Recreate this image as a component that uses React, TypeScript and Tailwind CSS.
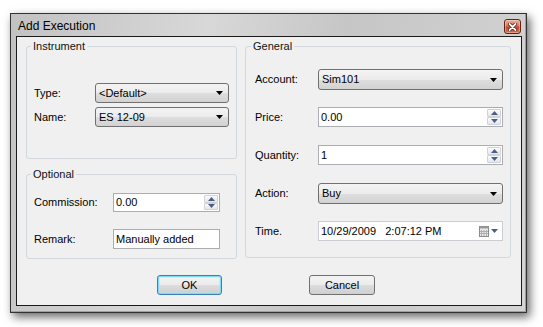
import React from 'react';

const font = { fontFamily: '"Liberation Sans", Arial, sans-serif' };

const Arrow = () => (
  <svg width="7" height="4" viewBox="0 0 7 4">
    <polygon points="0,0 7,0 3.5,4" fill="#000" />
  </svg>
);

const Combo: React.FC<{ value: string; className: string }> = ({ value, className }) => (
  <div
    className={`flex items-center justify-between rounded-[3px] border border-[#707070] bg-[linear-gradient(#f4f4f4_0%,#ebebeb_50%,#dedede_51%,#d2d2d2_100%)] pl-[3px] pr-[5px] text-[11px] text-black ${className}`}
  >
    <span>{value}</span>
    <Arrow />
  </div>
);

const SpinBtn: React.FC<{ up?: boolean }> = ({ up }) => (
  <div className="flex flex-1 items-center justify-center rounded-[1px] border border-[#cfd3d8] bg-[linear-gradient(#fbfbfb,#e4e6ea)]">
    <svg width="7" height="4" viewBox="0 0 7 4">
      <polygon points={up ? '0,4 7,4 3.5,0' : '0,0 7,0 3.5,4'} fill="#4c5e86" />
    </svg>
  </div>
);

const Spin: React.FC<{ value: string; className: string }> = ({ value, className }) => (
  <div className={`flex items-stretch border border-[#abadb3] bg-white ${className}`}>
    <span className="flex flex-1 items-center pl-[2px] text-[11px] text-black">{value}</span>
    <div className="m-[1px] flex w-[14px] flex-col">
      <SpinBtn up />
      <SpinBtn />
    </div>
  </div>
);

const Field: React.FC<{ label: string; labelW: string; mt: string; children: React.ReactNode }> = ({
  label,
  labelW,
  mt,
  children,
}) => (
  <div className={`flex items-center ${mt}`}>
    <span className={`${labelW} shrink-0 text-[11px] text-black`}>{label}</span>
    {children}
  </div>
);

const Group: React.FC<{ title: string; className: string; legend: string; children: React.ReactNode }> = ({
  title,
  className,
  legend,
  children,
}) => (
  <fieldset className={`rounded-[3px] border border-[#d2d8dc] ${className}`}>
    <legend className={`${legend} px-[2px] text-[11px] leading-[13px] text-[#111]`}>{title}</legend>
    {children}
  </fieldset>
);

export default function App() {
  return (
    <div className="h-[327px] w-[543px] overflow-hidden bg-white pl-[10px] pt-[13px]" style={font}>
      <div className="h-[300px] w-[517px] border border-[#333] shadow-[3px_4px_9px_rgba(0,0,0,0.6)]">
        <div className="flex h-full w-full flex-col border-b border-r border-[#3ec3e0] bg-[linear-gradient(100deg,#c2c2c2,#d8d8d8_35%,#c6c6c6_60%,#d4d4d4)] pb-[5px] pl-[5px] pr-[3px]">
          {/* title bar */}
          <div className="-ml-[5px] -mr-[3px] flex h-[22px] shrink-0 items-start justify-between pl-[7px] pr-[4px]">
            <span className="mt-[4px] text-[12px] leading-[16px] text-black">Add Execution</span>
            <div className="mt-[5px] flex h-[15px] w-[17px] items-center justify-center rounded-[3px] border border-[#5e2417] bg-[linear-gradient(#eeb09c,#da7258_45%,#c9442a_55%,#dc6c4c)] shadow-[inset_0_0_0_1px_rgba(255,255,255,0.35)]">
              <svg width="9" height="8" viewBox="0 0 9 8">
                <path d="M1.5 1 L7.5 7 M7.5 1 L1.5 7" stroke="#4a1a12" strokeWidth="3.4" strokeLinecap="round" />
                <path d="M1.5 1 L7.5 7 M7.5 1 L1.5 7" stroke="#fff" strokeWidth="1.8" strokeLinecap="round" />
              </svg>
            </div>
          </div>

          {/* client area */}
          <div className="flex flex-1 flex-col border border-[#1a1a1a] bg-[#f0f0f0] pl-[9px] pt-[3px]">
            <div className="flex gap-[8px]">
              <div className="flex w-[211px] flex-col gap-[9px]">
                <Group title="Instrument" legend="-ml-[3px]" className="h-[119px] pl-[7px]">
                  <Field label="Type:" labelW="w-[61px]" mt="mt-[30px]">
                    <Combo value="<Default>" className="h-[20px] w-[134px]" />
                  </Field>
                  <Field label="Name:" labelW="w-[61px]" mt="mt-[4px]">
                    <Combo value="ES 12-09" className="h-[20px] w-[134px]" />
                  </Field>
                </Group>
                <Group title="Optional" legend="-ml-[3px]" className="h-[91px] pl-[7px]">
                  <Field label="Commission:" labelW="w-[79px]" mt="mt-[12px]">
                    <Spin value="0.00" className="h-[19px] w-[107px]" />
                  </Field>
                  <Field label="Remark:" labelW="w-[79px]" mt="mt-[17px]">
                    <div className="flex h-[20px] w-[107px] items-center border border-[#abadb3] bg-white pl-[2px] text-[11px] text-black">
                      Manually added
                    </div>
                  </Field>
                </Group>
              </div>

              <Group title="General" legend="-ml-[4px]" className="h-[218px] w-[266px] pl-[9px]">
                <Field label="Account:" labelW="w-[63px]" mt="mt-[16px]">
                  <Combo value="Sim101" className="h-[21px] w-[185px]" />
                </Field>
                <Field label="Price:" labelW="w-[63px]" mt="mt-[17px]">
                  <Spin value="0.00" className="h-[20px] w-[185px]" />
                </Field>
                <Field label="Quantity:" labelW="w-[63px]" mt="mt-[18px]">
                  <Spin value="1" className="h-[20px] w-[185px]" />
                </Field>
                <Field label="Action:" labelW="w-[63px]" mt="mt-[18px]">
                  <Combo value="Buy" className="h-[21px] w-[185px]" />
                </Field>
                <Field label="Time." labelW="w-[63px]" mt="mt-[17px]">
                  <div className="flex h-[20px] w-[185px] items-center justify-between border border-[#c9ccd1] bg-white pl-[2px] pr-[4px] text-[11px] text-black">
                    <span className="whitespace-pre">10/29/2009   2:07:12 PM</span>
                    <div className="flex items-center gap-[2px]">
                      <svg width="10" height="11" viewBox="0 0 10 11">
                        <rect x="0.5" y="0.5" width="9" height="10" fill="#e8e8e8" stroke="#8a8a8a" />
                        <rect x="0.5" y="0.5" width="9" height="2" fill="#9a9a9a" />
                        <path d="M2.5 4v6M5 4v6M7.5 4v6M1 5.5h8M1 7.5h8" stroke="#b0b0b0" strokeWidth="1" />
                      </svg>
                      <svg width="7" height="4" viewBox="0 0 7 4">
                        <polygon points="0,0 7,0 3.5,4" fill="#4f5f7a" />
                      </svg>
                    </div>
                  </div>
                </Field>
              </Group>
            </div>

            {/* buttons */}
            <div className="mt-[16px] flex">
              <div className="ml-[131px] flex h-[20px] w-[65px] items-center justify-center rounded-[3px] border border-[#3c7fb1] bg-[linear-gradient(#f4f4f4_0%,#ebebeb_50%,#dddddd_51%,#cfcfcf_100%)] text-[11px] text-black shadow-[inset_0_0_0_1px_#7fdcf6,inset_0_0_0_2px_rgba(160,230,250,0.45)]">
                OK
              </div>
              <div className="ml-[87px] flex h-[20px] w-[66px] items-center justify-center rounded-[3px] border border-[#707070] bg-[linear-gradient(#f4f4f4_0%,#ebebeb_50%,#dddddd_51%,#cfcfcf_100%)] text-[11px] text-black">
                Cancel
              </div>
            </div>
          </div>
        </div>
      </div>
    </div>
  );
}
